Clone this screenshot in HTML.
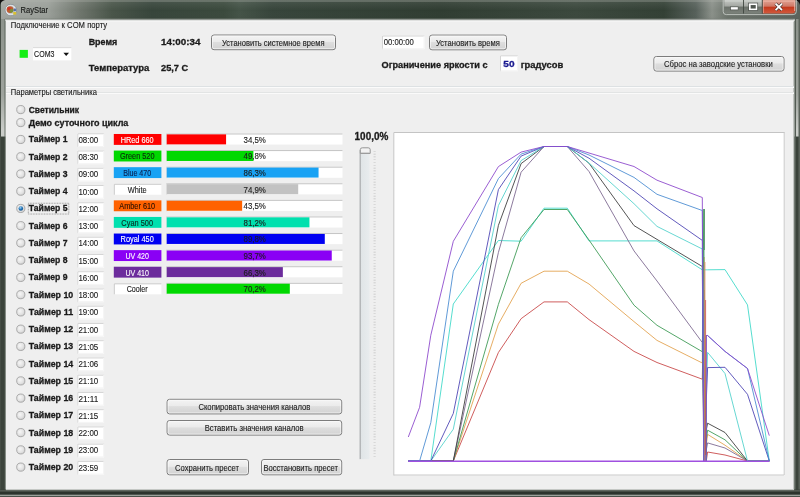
<!DOCTYPE html><html><head><meta charset="utf-8"><style>html,body{margin:0;padding:0;width:800px;height:497px;overflow:hidden;background:#7a807a}svg{display:block;filter:blur(0.3px)}text{font-family:"Liberation Sans",sans-serif}</style></head><body>
<svg width="800" height="497" viewBox="0 0 800 497">
<defs>
<linearGradient id="btn" x1="0" y1="0" x2="0" y2="1">
 <stop offset="0" stop-color="#f4f4f4"/><stop offset="0.45" stop-color="#ebebeb"/><stop offset="0.5" stop-color="#dedede"/><stop offset="1" stop-color="#d2d2d2"/>
</linearGradient>
<linearGradient id="title" x1="0" y1="0" x2="1" y2="0">
 <stop offset="0" stop-color="#a2a6a1"/><stop offset="0.06" stop-color="#9a9f99"/><stop offset="0.10" stop-color="#6e756c"/><stop offset="0.14" stop-color="#485448"/><stop offset="0.19" stop-color="#36443a"/>
 <stop offset="0.28" stop-color="#3a493c"/><stop offset="0.30" stop-color="#435246"/><stop offset="0.34" stop-color="#36443a"/>
 <stop offset="0.55" stop-color="#2f3c31"/><stop offset="0.72" stop-color="#3a473c"/><stop offset="0.83" stop-color="#323f34"/><stop offset="0.87" stop-color="#56605a"/><stop offset="0.89" stop-color="#8a9089"/><stop offset="0.91" stop-color="#6a726a"/><stop offset="1" stop-color="#5a625c"/>
</linearGradient>
<linearGradient id="tvert" x1="0" y1="0" x2="0" y2="1">
 <stop offset="0" stop-color="#ffffff" stop-opacity="0.10"/><stop offset="0.5" stop-color="#ffffff" stop-opacity="0"/><stop offset="1" stop-color="#000000" stop-opacity="0.05"/>
</linearGradient>
<linearGradient id="minb" x1="0" y1="0" x2="0" y2="1">
 <stop offset="0" stop-color="#c4c7c3"/><stop offset="0.45" stop-color="#a4a8a3"/><stop offset="0.52" stop-color="#6c726b"/><stop offset="1" stop-color="#7c827b"/>
</linearGradient>
<linearGradient id="closeb" x1="0" y1="0" x2="0" y2="1">
 <stop offset="0" stop-color="#e0a494"/><stop offset="0.45" stop-color="#d07a68"/><stop offset="0.55" stop-color="#c43a1e"/><stop offset="1" stop-color="#d25a3e"/>
</linearGradient>
<linearGradient id="lframe" x1="0" y1="0" x2="0" y2="1">
 <stop offset="0" stop-color="#8c928b"/><stop offset="0.16" stop-color="#9ea39d"/><stop offset="0.235" stop-color="#c9ccc8"/><stop offset="0.248" stop-color="#c9ccc8"/><stop offset="0.25" stop-color="#3a423a"/><stop offset="1" stop-color="#3c443c"/>
</linearGradient>
<linearGradient id="groove" x1="0" y1="0" x2="1" y2="0">
 <stop offset="0" stop-color="#b4b7b9"/><stop offset="0.15" stop-color="#e0e5e7"/><stop offset="1" stop-color="#e8ecee"/>
</linearGradient>
<radialGradient id="radio" cx="0.4" cy="0.4" r="0.7">
 <stop offset="0" stop-color="#f6f6f6"/><stop offset="0.6" stop-color="#e2e2e2"/><stop offset="1" stop-color="#c4c4c4"/>
</radialGradient>
<radialGradient id="radiodot" cx="0.4" cy="0.35" r="0.7">
 <stop offset="0" stop-color="#9fd3f3"/><stop offset="0.5" stop-color="#2a7cc0"/><stop offset="1" stop-color="#0d4a80"/>
</radialGradient>
</defs>
<rect x="0" y="0" width="800" height="497" fill="#3e463e"/>
<rect x="0" y="0" width="800" height="21" fill="url(#title)"/>
<rect x="0" y="0" width="800" height="21" fill="url(#tvert)"/>
<rect x="0" y="0.5" width="800" height="1" fill="#b0b4ae" opacity="0.6"/>
<rect x="0" y="19" width="6" height="472" fill="url(#lframe)"/>
<rect x="0" y="0" width="1" height="497" fill="#454d45"/>
<rect x="4.6" y="19" width="1" height="472" fill="#545c54"/>
<rect x="5.6" y="19" width="0.6" height="472" fill="#e4e8e4"/>
<rect x="794" y="19" width="6" height="472" fill="url(#lframe)"/>
<rect x="793.6" y="19" width="0.9" height="471" fill="#e8ece8"/>
<rect x="794.5" y="19" width="1.5" height="472" fill="#545c54"/>
<rect x="798.5" y="0" width="1.5" height="497" fill="#5a625a"/>
<rect x="0" y="489.5" width="800" height="7.5" fill="#3a423a"/>
<rect x="6" y="489.3" width="788" height="1" fill="#e4e8e4"/>
<rect x="0" y="490.3" width="800" height="1.4" fill="#5c645c"/>
<rect x="0" y="491.7" width="800" height="3" fill="#2c342d"/>
<rect x="0" y="494.7" width="800" height="1.3" fill="#9aa09a"/>
<rect x="0" y="496" width="800" height="1" fill="#4a524a"/>
<path d="M0 0 H5 Q1 1 0 5 Z" fill="#111"/>
<path d="M800 0 H795 Q799 1 800 5 Z" fill="#111"/>
<rect x="5" y="18.6" width="790" height="1" fill="#7c827c"/>
<rect x="5" y="19.6" width="790" height="1" fill="#dfe2df"/>
<rect x="6" y="20.5" width="787.6" height="468.8" fill="#efefef"/>
<rect x="6" y="20.5" width="788" height="1" fill="#fafafa"/>
<circle cx="10.8" cy="10" r="5" fill="#c8ccd0" stroke="#eef0f2" stroke-width="1.2"/>
<circle cx="10.8" cy="10" r="5.6" fill="none" stroke="#5c6a7c" stroke-width="0.6" opacity="0.7"/>
<circle cx="10" cy="9.6" r="3.4" fill="#c05a30"/>
<circle cx="11.5" cy="10.8" r="2" fill="#6a9a40" opacity="0.8"/>
<circle cx="9" cy="8.5" r="1.6" fill="#d03028" opacity="0.9"/>
<rect x="13.2" y="12" width="3" height="2.6" fill="#d8c030"/>
<rect x="13.6" y="8.6" width="2.6" height="2.6" fill="#3a5a9a" opacity="0.8"/>
<text x="20.6" y="12.8" font-size="8.8" textLength="27.4" lengthAdjust="spacingAndGlyphs" fill="#1a1c1a" stroke="#1a1c1a" stroke-width="0.15">RayStar</text>
<path d="M723.2 0 V11.5 Q723.2 14.6 726.3 14.6 H793.2 Q796.3 14.6 796.3 11.5 V0" fill="none" stroke="#c4c8c4" stroke-width="0.9"/>
<path d="M724.3 0 V10.8 Q724.3 13.5 727 13.5 H743.2 V0 Z" fill="url(#minb)"/>
<path d="M743.8 0 V13.5 H762 V0 Z" fill="url(#minb)"/>
<path d="M762.6 0 V13.5 H792.6 Q795.3 13.5 795.3 10.8 V0 Z" fill="url(#closeb)"/>
<path d="M724.8 1 H742.8 M744.3 1 H761.5" stroke="#d4d8d4" stroke-width="0.9"/>
<path d="M763.2 1.2 H794.6 M763.2 1.2 V13 M794.6 1.2 V11" stroke="#f0b8a8" stroke-width="0.8" fill="none"/>
<path d="M743.5 0 V13.5 M762.3 0 V13.5" stroke="#3c423c" stroke-width="0.8"/>
<rect x="730.6" y="6.9" width="7.5" height="3" fill="#ffffff" stroke="#3a3e3a" stroke-width="0.5"/>
<rect x="749.8" y="4.2" width="6.8" height="5.2" fill="#505650" stroke="#ffffff" stroke-width="1.7"/>
<rect x="748.6" y="3" width="9.2" height="7.6" fill="none" stroke="#3a3e3a" stroke-width="0.5"/>
<path d="M775.6 3.6 L782 10.2 M782 3.6 L775.6 10.2" stroke="#3a2a28" stroke-width="3"/>
<path d="M775.6 3.6 L782 10.2 M782 3.6 L775.6 10.2" stroke="#ffffff" stroke-width="1.9"/>
<text x="10.8" y="28.2" font-size="8.4" stroke="#1b1b1b" stroke-width="0.12" textLength="96.3" lengthAdjust="spacingAndGlyphs" fill="#1b1b1b" >Подключение к COM порту</text>
<rect x="19.6" y="49.9" width="8.3" height="7.9" fill="#14ee14"/>
<rect x="33" y="47.3" width="38.3" height="13.1" fill="#ffffff"/>
<rect x="33" y="47.3" width="38.3" height="0.8" fill="#d0d0d0"/>
<text x="34.1" y="56.7" font-size="8.4" stroke="#1b1b1b" stroke-width="0.12" textLength="20.3" lengthAdjust="spacingAndGlyphs" fill="#1b1b1b" >COM3</text>
<path d="M63.4 52.8 H69 L66.2 56 Z" fill="#111"/>
<text x="88.7" y="45" font-size="9.3" font-weight="bold" stroke="#1b1b1b" stroke-width="0.3" textLength="28.5" lengthAdjust="spacingAndGlyphs" fill="#1b1b1b" >Время</text>
<text x="161" y="45" font-size="9.3" font-weight="bold" stroke="#1b1b1b" stroke-width="0.3" textLength="39.4" lengthAdjust="spacingAndGlyphs" fill="#1b1b1b" >14:00:34</text>
<rect x="211.5" y="35.0" width="124" height="14.700000000000003" rx="2.5" fill="url(#btn)" stroke="#7c7c7c" stroke-width="1"/>
<rect x="212.5" y="36.0" width="122" height="12.700000000000003" rx="1.5" fill="none" stroke="#fbfbfb" stroke-width="0.8" opacity="0.8"/>
<text x="222" y="45.599999999999994" font-size="8.6" stroke="#1e1e1e" stroke-width="0.12" textLength="102.5" lengthAdjust="spacingAndGlyphs" fill="#1e1e1e" >Установить системное время</text>
<rect x="382" y="35.5" width="42.5" height="13.700000000000003" fill="#ffffff"/>
<path d="M382.5 49.2 V36.0 H424.5" fill="none" stroke="#d4d4d4" stroke-width="1"/>
<path d="M382.5 48.7 H424.0 V36.0" fill="none" stroke="#f4f4f4" stroke-width="1"/>
<text x="383.8" y="44.8" font-size="8.4" stroke="#1b1b1b" stroke-width="0.12" textLength="30" lengthAdjust="spacingAndGlyphs" fill="#1b1b1b" >00:00:00</text>
<rect x="429.5" y="35.1" width="77" height="14.699999999999996" rx="2.5" fill="url(#btn)" stroke="#7c7c7c" stroke-width="1"/>
<rect x="430.5" y="36.1" width="75" height="12.699999999999996" rx="1.5" fill="none" stroke="#fbfbfb" stroke-width="0.8" opacity="0.8"/>
<text x="436" y="45.599999999999994" font-size="8.6" stroke="#1e1e1e" stroke-width="0.12" textLength="63.8" lengthAdjust="spacingAndGlyphs" fill="#1e1e1e" >Установить время</text>
<text x="88.7" y="70.8" font-size="9.3" font-weight="bold" stroke="#1b1b1b" stroke-width="0.3" textLength="60.6" lengthAdjust="spacingAndGlyphs" fill="#1b1b1b" >Температура</text>
<text x="161" y="70.8" font-size="9.3" font-weight="bold" stroke="#1b1b1b" stroke-width="0.3" textLength="27.2" lengthAdjust="spacingAndGlyphs" fill="#1b1b1b" >25,7 C</text>
<text x="381.5" y="68.2" font-size="9.3" font-weight="bold" stroke="#1b1b1b" stroke-width="0.3" textLength="106" lengthAdjust="spacingAndGlyphs" fill="#1b1b1b" >Ограничение яркости с</text>
<rect x="500" y="55.3" width="18" height="15.900000000000006" fill="#ffffff"/>
<path d="M500.5 71.2 V55.8 H518" fill="none" stroke="#d4d4d4" stroke-width="1"/>
<path d="M500.5 70.7 H517.5 V55.8" fill="none" stroke="#f4f4f4" stroke-width="1"/>
<text x="503.3" y="66.6" font-size="9.3" font-weight="bold" stroke="#1a1a90" stroke-width="0.3" textLength="11.2" lengthAdjust="spacingAndGlyphs" fill="#1a1a90" >50</text>
<text x="520.7" y="68.2" font-size="9.3" font-weight="bold" stroke="#1b1b1b" stroke-width="0.3" textLength="42.6" lengthAdjust="spacingAndGlyphs" fill="#1b1b1b" >градусов</text>
<rect x="653.9" y="56.5" width="130.10000000000002" height="14.599999999999994" rx="2.5" fill="url(#btn)" stroke="#7c7c7c" stroke-width="1"/>
<rect x="654.9" y="57.5" width="128.10000000000002" height="12.599999999999994" rx="1.5" fill="none" stroke="#fbfbfb" stroke-width="0.8" opacity="0.8"/>
<text x="664" y="67.2" font-size="8.6" stroke="#1e1e1e" stroke-width="0.12" textLength="108.8" lengthAdjust="spacingAndGlyphs" fill="#1e1e1e" >Сброс на заводские установки</text>
<rect x="6" y="86" width="788" height="1" fill="#dde1e3"/>
<rect x="6" y="87" width="788" height="1" fill="#fbfbfb"/>
<rect x="6" y="92" width="788" height="1" fill="#e2e4e4"/>
<rect x="6" y="93" width="788" height="1" fill="#fafafa"/>
<text x="10.8" y="95.1" font-size="8.4" stroke="#1b1b1b" stroke-width="0.12" textLength="86.1" lengthAdjust="spacingAndGlyphs" fill="#1b1b1b" >Параметры светильника</text>
<circle cx="20.8" cy="109.6" r="4.1" fill="url(#radio)" stroke="#a4a4a4" stroke-width="0.9"/>
<text x="28.7" y="112.5" font-size="9.3" font-weight="bold" stroke="#1b1b1b" stroke-width="0.3" textLength="50.3" lengthAdjust="spacingAndGlyphs" fill="#1b1b1b" >Светильник</text>
<circle cx="20.8" cy="122.6" r="4.1" fill="url(#radio)" stroke="#a4a4a4" stroke-width="0.9"/>
<text x="28.7" y="125.5" font-size="9.3" font-weight="bold" stroke="#1b1b1b" stroke-width="0.3" textLength="99.7" lengthAdjust="spacingAndGlyphs" fill="#1b1b1b" >Демо суточного цикла</text>
<circle cx="20.8" cy="139.46" r="4.1" fill="url(#radio)" stroke="#a4a4a4" stroke-width="0.9"/>
<text x="28.7" y="142.46" font-size="9.3" font-weight="bold" stroke="#1b1b1b" stroke-width="0.3" textLength="38.9" lengthAdjust="spacingAndGlyphs" fill="#1b1b1b" >Таймер 1</text>
<rect x="77.3" y="133.26" width="26.799999999999997" height="13.700000000000017" fill="#ffffff"/>
<path d="M77.8 146.96 V133.76 H104.1" fill="none" stroke="#d4d4d4" stroke-width="1"/>
<path d="M77.8 146.46 H103.6 V133.76" fill="none" stroke="#f4f4f4" stroke-width="1"/>
<text x="78.4" y="142.96" font-size="8.4" stroke="#1b1b1b" stroke-width="0.12" textLength="19.9" lengthAdjust="spacingAndGlyphs" fill="#1b1b1b" >08:00</text>
<circle cx="20.8" cy="156.71" r="4.1" fill="url(#radio)" stroke="#a4a4a4" stroke-width="0.9"/>
<text x="28.7" y="159.71" font-size="9.3" font-weight="bold" stroke="#1b1b1b" stroke-width="0.3" textLength="38.9" lengthAdjust="spacingAndGlyphs" fill="#1b1b1b" >Таймер 2</text>
<rect x="77.3" y="150.51" width="26.799999999999997" height="13.700000000000017" fill="#ffffff"/>
<path d="M77.8 164.21 V151.01 H104.1" fill="none" stroke="#d4d4d4" stroke-width="1"/>
<path d="M77.8 163.71 H103.6 V151.01" fill="none" stroke="#f4f4f4" stroke-width="1"/>
<text x="78.4" y="160.21" font-size="8.4" stroke="#1b1b1b" stroke-width="0.12" textLength="19.9" lengthAdjust="spacingAndGlyphs" fill="#1b1b1b" >08:30</text>
<circle cx="20.8" cy="173.95" r="4.1" fill="url(#radio)" stroke="#a4a4a4" stroke-width="0.9"/>
<text x="28.7" y="176.95" font-size="9.3" font-weight="bold" stroke="#1b1b1b" stroke-width="0.3" textLength="38.9" lengthAdjust="spacingAndGlyphs" fill="#1b1b1b" >Таймер 3</text>
<rect x="77.3" y="167.75" width="26.799999999999997" height="13.699999999999989" fill="#ffffff"/>
<path d="M77.8 181.45 V168.25 H104.1" fill="none" stroke="#d4d4d4" stroke-width="1"/>
<path d="M77.8 180.95 H103.6 V168.25" fill="none" stroke="#f4f4f4" stroke-width="1"/>
<text x="78.4" y="177.45" font-size="8.4" stroke="#1b1b1b" stroke-width="0.12" textLength="19.9" lengthAdjust="spacingAndGlyphs" fill="#1b1b1b" >09:00</text>
<circle cx="20.8" cy="191.19" r="4.1" fill="url(#radio)" stroke="#a4a4a4" stroke-width="0.9"/>
<text x="28.7" y="194.19" font-size="9.3" font-weight="bold" stroke="#1b1b1b" stroke-width="0.3" textLength="38.9" lengthAdjust="spacingAndGlyphs" fill="#1b1b1b" >Таймер 4</text>
<rect x="77.3" y="185.0" width="26.799999999999997" height="13.689999999999998" fill="#ffffff"/>
<path d="M77.8 198.69 V185.5 H104.1" fill="none" stroke="#d4d4d4" stroke-width="1"/>
<path d="M77.8 198.19 H103.6 V185.5" fill="none" stroke="#f4f4f4" stroke-width="1"/>
<text x="78.4" y="194.69" font-size="8.4" stroke="#1b1b1b" stroke-width="0.12" textLength="19.9" lengthAdjust="spacingAndGlyphs" fill="#1b1b1b" >10:00</text>
<circle cx="20.8" cy="208.44" r="4.1" fill="url(#radio)" stroke="#a4a4a4" stroke-width="0.9"/>
<circle cx="20.8" cy="208.44" r="2.3" fill="url(#radiodot)"/>
<text x="28.7" y="211.44" font-size="9.3" font-weight="bold" stroke="#1b1b1b" stroke-width="0.3" textLength="38.9" lengthAdjust="spacingAndGlyphs" fill="#1b1b1b" >Таймер 5</text>
<rect x="28.3" y="203.24" width="40.5" height="10.8" fill="none" stroke="#555" stroke-width="0.6" stroke-dasharray="0.8 0.8"/>
<rect x="77.3" y="202.24" width="26.799999999999997" height="13.699999999999989" fill="#ffffff"/>
<path d="M77.8 215.94 V202.74 H104.1" fill="none" stroke="#d4d4d4" stroke-width="1"/>
<path d="M77.8 215.44 H103.6 V202.74" fill="none" stroke="#f4f4f4" stroke-width="1"/>
<text x="78.4" y="211.94" font-size="8.4" stroke="#1b1b1b" stroke-width="0.12" textLength="19.9" lengthAdjust="spacingAndGlyphs" fill="#1b1b1b" >12:00</text>
<circle cx="20.8" cy="225.69" r="4.1" fill="url(#radio)" stroke="#a4a4a4" stroke-width="0.9"/>
<text x="28.7" y="228.69" font-size="9.3" font-weight="bold" stroke="#1b1b1b" stroke-width="0.3" textLength="38.9" lengthAdjust="spacingAndGlyphs" fill="#1b1b1b" >Таймер 6</text>
<rect x="77.3" y="219.49" width="26.799999999999997" height="13.699999999999989" fill="#ffffff"/>
<path d="M77.8 233.19 V219.99 H104.1" fill="none" stroke="#d4d4d4" stroke-width="1"/>
<path d="M77.8 232.69 H103.6 V219.99" fill="none" stroke="#f4f4f4" stroke-width="1"/>
<text x="78.4" y="229.19" font-size="8.4" stroke="#1b1b1b" stroke-width="0.12" textLength="19.9" lengthAdjust="spacingAndGlyphs" fill="#1b1b1b" >13:00</text>
<circle cx="20.8" cy="242.93" r="4.1" fill="url(#radio)" stroke="#a4a4a4" stroke-width="0.9"/>
<text x="28.7" y="245.93" font-size="9.3" font-weight="bold" stroke="#1b1b1b" stroke-width="0.3" textLength="38.9" lengthAdjust="spacingAndGlyphs" fill="#1b1b1b" >Таймер 7</text>
<rect x="77.3" y="236.73" width="26.799999999999997" height="13.700000000000017" fill="#ffffff"/>
<path d="M77.8 250.43 V237.23 H104.1" fill="none" stroke="#d4d4d4" stroke-width="1"/>
<path d="M77.8 249.93 H103.6 V237.23" fill="none" stroke="#f4f4f4" stroke-width="1"/>
<text x="78.4" y="246.43" font-size="8.4" stroke="#1b1b1b" stroke-width="0.12" textLength="19.9" lengthAdjust="spacingAndGlyphs" fill="#1b1b1b" >14:00</text>
<circle cx="20.8" cy="260.18" r="4.1" fill="url(#radio)" stroke="#a4a4a4" stroke-width="0.9"/>
<text x="28.7" y="263.18" font-size="9.3" font-weight="bold" stroke="#1b1b1b" stroke-width="0.3" textLength="38.9" lengthAdjust="spacingAndGlyphs" fill="#1b1b1b" >Таймер 8</text>
<rect x="77.3" y="253.98" width="26.799999999999997" height="13.700000000000017" fill="#ffffff"/>
<path d="M77.8 267.68 V254.48 H104.1" fill="none" stroke="#d4d4d4" stroke-width="1"/>
<path d="M77.8 267.18 H103.6 V254.48" fill="none" stroke="#f4f4f4" stroke-width="1"/>
<text x="78.4" y="263.68" font-size="8.4" stroke="#1b1b1b" stroke-width="0.12" textLength="19.9" lengthAdjust="spacingAndGlyphs" fill="#1b1b1b" >15:00</text>
<circle cx="20.8" cy="277.42" r="4.1" fill="url(#radio)" stroke="#a4a4a4" stroke-width="0.9"/>
<text x="28.7" y="280.42" font-size="9.3" font-weight="bold" stroke="#1b1b1b" stroke-width="0.3" textLength="38.9" lengthAdjust="spacingAndGlyphs" fill="#1b1b1b" >Таймер 9</text>
<rect x="77.3" y="271.22" width="26.799999999999997" height="13.699999999999989" fill="#ffffff"/>
<path d="M77.8 284.92 V271.72 H104.1" fill="none" stroke="#d4d4d4" stroke-width="1"/>
<path d="M77.8 284.42 H103.6 V271.72" fill="none" stroke="#f4f4f4" stroke-width="1"/>
<text x="78.4" y="280.92" font-size="8.4" stroke="#1b1b1b" stroke-width="0.12" textLength="19.9" lengthAdjust="spacingAndGlyphs" fill="#1b1b1b" >16:00</text>
<circle cx="20.8" cy="294.67" r="4.1" fill="url(#radio)" stroke="#a4a4a4" stroke-width="0.9"/>
<text x="28.7" y="297.67" font-size="9.3" font-weight="bold" stroke="#1b1b1b" stroke-width="0.3" textLength="44.5" lengthAdjust="spacingAndGlyphs" fill="#1b1b1b" >Таймер 10</text>
<rect x="77.3" y="288.47" width="26.799999999999997" height="13.699999999999989" fill="#ffffff"/>
<path d="M77.8 302.17 V288.97 H104.1" fill="none" stroke="#d4d4d4" stroke-width="1"/>
<path d="M77.8 301.67 H103.6 V288.97" fill="none" stroke="#f4f4f4" stroke-width="1"/>
<text x="78.4" y="298.17" font-size="8.4" stroke="#1b1b1b" stroke-width="0.12" textLength="19.9" lengthAdjust="spacingAndGlyphs" fill="#1b1b1b" >18:00</text>
<circle cx="20.8" cy="311.91" r="4.1" fill="url(#radio)" stroke="#a4a4a4" stroke-width="0.9"/>
<text x="28.7" y="314.91" font-size="9.3" font-weight="bold" stroke="#1b1b1b" stroke-width="0.3" textLength="44.5" lengthAdjust="spacingAndGlyphs" fill="#1b1b1b" >Таймер 11</text>
<rect x="77.3" y="305.71" width="26.799999999999997" height="13.700000000000045" fill="#ffffff"/>
<path d="M77.8 319.41 V306.21 H104.1" fill="none" stroke="#d4d4d4" stroke-width="1"/>
<path d="M77.8 318.91 H103.6 V306.21" fill="none" stroke="#f4f4f4" stroke-width="1"/>
<text x="78.4" y="315.41" font-size="8.4" stroke="#1b1b1b" stroke-width="0.12" textLength="19.9" lengthAdjust="spacingAndGlyphs" fill="#1b1b1b" >19:00</text>
<circle cx="20.8" cy="329.16" r="4.1" fill="url(#radio)" stroke="#a4a4a4" stroke-width="0.9"/>
<text x="28.7" y="332.16" font-size="9.3" font-weight="bold" stroke="#1b1b1b" stroke-width="0.3" textLength="44.5" lengthAdjust="spacingAndGlyphs" fill="#1b1b1b" >Таймер 12</text>
<rect x="77.3" y="322.96" width="26.799999999999997" height="13.700000000000045" fill="#ffffff"/>
<path d="M77.8 336.66 V323.46 H104.1" fill="none" stroke="#d4d4d4" stroke-width="1"/>
<path d="M77.8 336.16 H103.6 V323.46" fill="none" stroke="#f4f4f4" stroke-width="1"/>
<text x="78.4" y="332.66" font-size="8.4" stroke="#1b1b1b" stroke-width="0.12" textLength="19.9" lengthAdjust="spacingAndGlyphs" fill="#1b1b1b" >21:00</text>
<circle cx="20.8" cy="346.4" r="4.1" fill="url(#radio)" stroke="#a4a4a4" stroke-width="0.9"/>
<text x="28.7" y="349.4" font-size="9.3" font-weight="bold" stroke="#1b1b1b" stroke-width="0.3" textLength="44.5" lengthAdjust="spacingAndGlyphs" fill="#1b1b1b" >Таймер 13</text>
<rect x="77.3" y="340.2" width="26.799999999999997" height="13.699999999999989" fill="#ffffff"/>
<path d="M77.8 353.9 V340.7 H104.1" fill="none" stroke="#d4d4d4" stroke-width="1"/>
<path d="M77.8 353.4 H103.6 V340.7" fill="none" stroke="#f4f4f4" stroke-width="1"/>
<text x="78.4" y="349.9" font-size="8.4" stroke="#1b1b1b" stroke-width="0.12" textLength="19.9" lengthAdjust="spacingAndGlyphs" fill="#1b1b1b" >21:05</text>
<circle cx="20.8" cy="363.64" r="4.1" fill="url(#radio)" stroke="#a4a4a4" stroke-width="0.9"/>
<text x="28.7" y="366.64" font-size="9.3" font-weight="bold" stroke="#1b1b1b" stroke-width="0.3" textLength="44.5" lengthAdjust="spacingAndGlyphs" fill="#1b1b1b" >Таймер 14</text>
<rect x="77.3" y="357.44" width="26.799999999999997" height="13.699999999999989" fill="#ffffff"/>
<path d="M77.8 371.14 V357.94 H104.1" fill="none" stroke="#d4d4d4" stroke-width="1"/>
<path d="M77.8 370.64 H103.6 V357.94" fill="none" stroke="#f4f4f4" stroke-width="1"/>
<text x="78.4" y="367.14" font-size="8.4" stroke="#1b1b1b" stroke-width="0.12" textLength="19.9" lengthAdjust="spacingAndGlyphs" fill="#1b1b1b" >21:06</text>
<circle cx="20.8" cy="380.89" r="4.1" fill="url(#radio)" stroke="#a4a4a4" stroke-width="0.9"/>
<text x="28.7" y="383.89" font-size="9.3" font-weight="bold" stroke="#1b1b1b" stroke-width="0.3" textLength="44.5" lengthAdjust="spacingAndGlyphs" fill="#1b1b1b" >Таймер 15</text>
<rect x="77.3" y="374.69" width="26.799999999999997" height="13.699999999999989" fill="#ffffff"/>
<path d="M77.8 388.39 V375.19 H104.1" fill="none" stroke="#d4d4d4" stroke-width="1"/>
<path d="M77.8 387.89 H103.6 V375.19" fill="none" stroke="#f4f4f4" stroke-width="1"/>
<text x="78.4" y="384.39" font-size="8.4" stroke="#1b1b1b" stroke-width="0.12" textLength="19.9" lengthAdjust="spacingAndGlyphs" fill="#1b1b1b" >21:10</text>
<circle cx="20.8" cy="398.13" r="4.1" fill="url(#radio)" stroke="#a4a4a4" stroke-width="0.9"/>
<text x="28.7" y="401.13" font-size="9.3" font-weight="bold" stroke="#1b1b1b" stroke-width="0.3" textLength="44.5" lengthAdjust="spacingAndGlyphs" fill="#1b1b1b" >Таймер 16</text>
<rect x="77.3" y="391.94" width="26.799999999999997" height="13.689999999999998" fill="#ffffff"/>
<path d="M77.8 405.63 V392.44 H104.1" fill="none" stroke="#d4d4d4" stroke-width="1"/>
<path d="M77.8 405.13 H103.6 V392.44" fill="none" stroke="#f4f4f4" stroke-width="1"/>
<text x="78.4" y="401.63" font-size="8.4" stroke="#1b1b1b" stroke-width="0.12" textLength="19.9" lengthAdjust="spacingAndGlyphs" fill="#1b1b1b" >21:11</text>
<circle cx="20.8" cy="415.38" r="4.1" fill="url(#radio)" stroke="#a4a4a4" stroke-width="0.9"/>
<text x="28.7" y="418.38" font-size="9.3" font-weight="bold" stroke="#1b1b1b" stroke-width="0.3" textLength="44.5" lengthAdjust="spacingAndGlyphs" fill="#1b1b1b" >Таймер 17</text>
<rect x="77.3" y="409.18" width="26.799999999999997" height="13.699999999999989" fill="#ffffff"/>
<path d="M77.8 422.88 V409.68 H104.1" fill="none" stroke="#d4d4d4" stroke-width="1"/>
<path d="M77.8 422.38 H103.6 V409.68" fill="none" stroke="#f4f4f4" stroke-width="1"/>
<text x="78.4" y="418.88" font-size="8.4" stroke="#1b1b1b" stroke-width="0.12" textLength="19.9" lengthAdjust="spacingAndGlyphs" fill="#1b1b1b" >21:15</text>
<circle cx="20.8" cy="432.62" r="4.1" fill="url(#radio)" stroke="#a4a4a4" stroke-width="0.9"/>
<text x="28.7" y="435.62" font-size="9.3" font-weight="bold" stroke="#1b1b1b" stroke-width="0.3" textLength="44.5" lengthAdjust="spacingAndGlyphs" fill="#1b1b1b" >Таймер 18</text>
<rect x="77.3" y="426.43" width="26.799999999999997" height="13.689999999999998" fill="#ffffff"/>
<path d="M77.8 440.12 V426.93 H104.1" fill="none" stroke="#d4d4d4" stroke-width="1"/>
<path d="M77.8 439.62 H103.6 V426.93" fill="none" stroke="#f4f4f4" stroke-width="1"/>
<text x="78.4" y="436.12" font-size="8.4" stroke="#1b1b1b" stroke-width="0.12" textLength="19.9" lengthAdjust="spacingAndGlyphs" fill="#1b1b1b" >22:00</text>
<circle cx="20.8" cy="449.87" r="4.1" fill="url(#radio)" stroke="#a4a4a4" stroke-width="0.9"/>
<text x="28.7" y="452.87" font-size="9.3" font-weight="bold" stroke="#1b1b1b" stroke-width="0.3" textLength="44.5" lengthAdjust="spacingAndGlyphs" fill="#1b1b1b" >Таймер 19</text>
<rect x="77.3" y="443.67" width="26.799999999999997" height="13.699999999999989" fill="#ffffff"/>
<path d="M77.8 457.37 V444.17 H104.1" fill="none" stroke="#d4d4d4" stroke-width="1"/>
<path d="M77.8 456.87 H103.6 V444.17" fill="none" stroke="#f4f4f4" stroke-width="1"/>
<text x="78.4" y="453.37" font-size="8.4" stroke="#1b1b1b" stroke-width="0.12" textLength="19.9" lengthAdjust="spacingAndGlyphs" fill="#1b1b1b" >23:00</text>
<circle cx="20.8" cy="467.12" r="4.1" fill="url(#radio)" stroke="#a4a4a4" stroke-width="0.9"/>
<text x="28.7" y="470.12" font-size="9.3" font-weight="bold" stroke="#1b1b1b" stroke-width="0.3" textLength="44.5" lengthAdjust="spacingAndGlyphs" fill="#1b1b1b" >Таймер 20</text>
<rect x="77.3" y="460.92" width="26.799999999999997" height="13.699999999999989" fill="#ffffff"/>
<path d="M77.8 474.62 V461.42 H104.1" fill="none" stroke="#d4d4d4" stroke-width="1"/>
<path d="M77.8 474.12 H103.6 V461.42" fill="none" stroke="#f4f4f4" stroke-width="1"/>
<text x="78.4" y="470.62" font-size="8.4" stroke="#1b1b1b" stroke-width="0.12" textLength="19.9" lengthAdjust="spacingAndGlyphs" fill="#1b1b1b" >23:59</text>
<rect x="113.8" y="133.98" width="47.6" height="10.9" fill="#ff0000"/>
<text x="137.2" y="142.88" font-size="8.4" stroke="#ffffff" stroke-width="0.12" text-anchor="middle" fill="#ffffff" textLength="33" lengthAdjust="spacingAndGlyphs">HRed 660</text>
<rect x="166.2" y="133.48" width="176.3" height="11.1" fill="#ffffff"/>
<rect x="166.2" y="133.48" width="176.3" height="1" fill="#c4c4c4"/>
<rect x="166.2" y="133.98" width="1" height="11" fill="#e0e0e0"/>
<rect x="166.7" y="134.38" width="59.38" height="10" fill="#ff0000"/>
<text x="254.7" y="142.78" font-size="8.2" stroke="#1b1b1b" stroke-width="0.12" text-anchor="middle" fill="#1b1b1b" textLength="22.4" lengthAdjust="spacingAndGlyphs">34,5%</text>
<rect x="113.8" y="150.57" width="47.6" height="10.9" fill="#00d800"/>
<text x="137.2" y="159.47" font-size="8.4" stroke="#0b2a0b" stroke-width="0.12" text-anchor="middle" fill="#0b2a0b" textLength="34.5" lengthAdjust="spacingAndGlyphs">Green 520</text>
<rect x="166.2" y="150.07" width="176.3" height="11.1" fill="#ffffff"/>
<rect x="166.2" y="150.07" width="176.3" height="1" fill="#c4c4c4"/>
<rect x="166.2" y="150.57" width="1" height="11" fill="#e0e0e0"/>
<rect x="166.7" y="150.97" width="86.69" height="10" fill="#00d800"/>
<text x="254.7" y="159.37" font-size="8.2" stroke="#1b1b1b" stroke-width="0.12" text-anchor="middle" fill="#1b1b1b" textLength="22.4" lengthAdjust="spacingAndGlyphs">49,8%</text>
<rect x="113.8" y="167.17" width="47.6" height="10.9" fill="#18a2f4"/>
<text x="137.2" y="176.07" font-size="8.4" stroke="#0a2050" stroke-width="0.12" text-anchor="middle" fill="#0a2050" textLength="28" lengthAdjust="spacingAndGlyphs">Blue 470</text>
<rect x="166.2" y="166.67" width="176.3" height="11.1" fill="#ffffff"/>
<rect x="166.2" y="166.67" width="176.3" height="1" fill="#c4c4c4"/>
<rect x="166.2" y="167.17" width="1" height="11" fill="#e0e0e0"/>
<rect x="166.7" y="167.57" width="151.85" height="10" fill="#18a2f4"/>
<text x="254.7" y="175.97" font-size="8.2" stroke="#1b1b1b" stroke-width="0.12" text-anchor="middle" fill="#1b1b1b" textLength="22.4" lengthAdjust="spacingAndGlyphs">86,3%</text>
<rect x="113.8" y="183.76" width="47.6" height="11" fill="#ffffff"/>
<path d="M114.3 194.76 V184.26 H161.4" fill="none" stroke="#c8c8c8" stroke-width="1"/>
<text x="137.2" y="192.66" font-size="8.4" stroke="#1b1b1b" stroke-width="0.12" text-anchor="middle" fill="#1b1b1b" textLength="18.9" lengthAdjust="spacingAndGlyphs">White</text>
<rect x="166.2" y="183.26" width="176.3" height="11.1" fill="#ffffff"/>
<rect x="166.2" y="183.26" width="176.3" height="1" fill="#c4c4c4"/>
<rect x="166.2" y="183.76" width="1" height="11" fill="#e0e0e0"/>
<rect x="166.7" y="184.16" width="131.5" height="10" fill="#c2c2c2"/>
<text x="254.7" y="192.56" font-size="8.2" stroke="#1b1b1b" stroke-width="0.12" text-anchor="middle" fill="#1b1b1b" textLength="22.4" lengthAdjust="spacingAndGlyphs">74,9%</text>
<rect x="113.8" y="200.35" width="47.6" height="10.9" fill="#ff6200"/>
<text x="137.2" y="209.25" font-size="8.4" stroke="#2a1000" stroke-width="0.12" text-anchor="middle" fill="#2a1000" textLength="35.9" lengthAdjust="spacingAndGlyphs">Amber 610</text>
<rect x="166.2" y="199.85" width="176.3" height="11.1" fill="#ffffff"/>
<rect x="166.2" y="199.85" width="176.3" height="1" fill="#c4c4c4"/>
<rect x="166.2" y="200.35" width="1" height="11" fill="#e0e0e0"/>
<rect x="166.7" y="200.75" width="75.45" height="10" fill="#ff6200"/>
<text x="254.7" y="209.15" font-size="8.2" stroke="#1b1b1b" stroke-width="0.12" text-anchor="middle" fill="#1b1b1b" textLength="22.4" lengthAdjust="spacingAndGlyphs">43,5%</text>
<rect x="113.8" y="216.94" width="47.6" height="10.9" fill="#00e0ae"/>
<text x="137.2" y="225.84" font-size="8.4" stroke="#0a2a20" stroke-width="0.12" text-anchor="middle" fill="#0a2a20" textLength="31.7" lengthAdjust="spacingAndGlyphs">Cyan 500</text>
<rect x="166.2" y="216.44" width="176.3" height="11.1" fill="#ffffff"/>
<rect x="166.2" y="216.44" width="176.3" height="1" fill="#c4c4c4"/>
<rect x="166.2" y="216.94" width="1" height="11" fill="#e0e0e0"/>
<rect x="166.7" y="217.34" width="142.74" height="10" fill="#00e0ae"/>
<text x="254.7" y="225.74" font-size="8.2" stroke="#1b1b1b" stroke-width="0.12" text-anchor="middle" fill="#1b1b1b" textLength="22.4" lengthAdjust="spacingAndGlyphs">81,2%</text>
<rect x="113.8" y="233.54" width="47.6" height="10.9" fill="#0000f2"/>
<text x="137.2" y="242.44" font-size="8.4" stroke="#ffffff" stroke-width="0.12" text-anchor="middle" fill="#ffffff" textLength="33.2" lengthAdjust="spacingAndGlyphs">Royal 450</text>
<rect x="166.2" y="233.04" width="176.3" height="11.1" fill="#ffffff"/>
<rect x="166.2" y="233.04" width="176.3" height="1" fill="#c4c4c4"/>
<rect x="166.2" y="233.54" width="1" height="11" fill="#e0e0e0"/>
<rect x="166.7" y="233.94" width="158.09" height="10" fill="#0000f2"/>
<text x="254.7" y="242.34" font-size="8.2" stroke="#1b1b1b" stroke-width="0.12" text-anchor="middle" fill="#1b1b1b" textLength="22.4" lengthAdjust="spacingAndGlyphs">89,8%</text>
<rect x="113.8" y="250.13" width="47.6" height="10.9" fill="#8a00f5"/>
<text x="137.2" y="259.03" font-size="8.4" stroke="#ffffff" stroke-width="0.12" text-anchor="middle" fill="#ffffff" textLength="23.5" lengthAdjust="spacingAndGlyphs">UV 420</text>
<rect x="166.2" y="249.63" width="176.3" height="11.1" fill="#ffffff"/>
<rect x="166.2" y="249.63" width="176.3" height="1" fill="#c4c4c4"/>
<rect x="166.2" y="250.13" width="1" height="11" fill="#e0e0e0"/>
<rect x="166.7" y="250.53" width="165.05" height="10" fill="#8a00f5"/>
<text x="254.7" y="258.93" font-size="8.2" stroke="#1b1b1b" stroke-width="0.12" text-anchor="middle" fill="#1b1b1b" textLength="22.4" lengthAdjust="spacingAndGlyphs">93,7%</text>
<rect x="113.8" y="266.72" width="47.6" height="10.9" fill="#6c2c9c"/>
<text x="137.2" y="275.62" font-size="8.4" stroke="#ffffff" stroke-width="0.12" text-anchor="middle" fill="#ffffff" textLength="23.5" lengthAdjust="spacingAndGlyphs">UV 410</text>
<rect x="166.2" y="266.22" width="176.3" height="11.1" fill="#ffffff"/>
<rect x="166.2" y="266.22" width="176.3" height="1" fill="#c4c4c4"/>
<rect x="166.2" y="266.72" width="1" height="11" fill="#e0e0e0"/>
<rect x="166.7" y="267.12" width="116.15" height="10" fill="#6c2c9c"/>
<text x="254.7" y="275.52" font-size="8.2" stroke="#1b1b1b" stroke-width="0.12" text-anchor="middle" fill="#1b1b1b" textLength="22.4" lengthAdjust="spacingAndGlyphs">66,3%</text>
<rect x="113.8" y="283.32" width="47.6" height="11" fill="#ffffff"/>
<path d="M114.3 294.32 V283.82 H161.4" fill="none" stroke="#c8c8c8" stroke-width="1"/>
<text x="137.2" y="292.22" font-size="8.4" stroke="#1b1b1b" stroke-width="0.12" text-anchor="middle" fill="#1b1b1b" textLength="21.1" lengthAdjust="spacingAndGlyphs">Cooler</text>
<rect x="166.2" y="282.82" width="176.3" height="11.1" fill="#ffffff"/>
<rect x="166.2" y="282.82" width="176.3" height="1" fill="#c4c4c4"/>
<rect x="166.2" y="283.32" width="1" height="11" fill="#e0e0e0"/>
<rect x="166.7" y="283.71999999999997" width="123.11" height="10" fill="#00d800"/>
<text x="254.7" y="292.12" font-size="8.2" stroke="#1b1b1b" stroke-width="0.12" text-anchor="middle" fill="#1b1b1b" textLength="22.4" lengthAdjust="spacingAndGlyphs">70,2%</text>
<rect x="167.1" y="399.3" width="174.6" height="14.599999999999966" rx="2.5" fill="url(#btn)" stroke="#7c7c7c" stroke-width="1"/>
<rect x="168.1" y="400.3" width="172.6" height="12.599999999999966" rx="1.5" fill="none" stroke="#fbfbfb" stroke-width="0.8" opacity="0.8"/>
<text x="198.4" y="410.0" font-size="8.6" stroke="#1e1e1e" stroke-width="0.12" textLength="112" lengthAdjust="spacingAndGlyphs" fill="#1e1e1e" >Скопировать значения каналов</text>
<rect x="167.1" y="420.5" width="174.6" height="14.600000000000023" rx="2.5" fill="url(#btn)" stroke="#7c7c7c" stroke-width="1"/>
<rect x="168.1" y="421.5" width="172.6" height="12.600000000000023" rx="1.5" fill="none" stroke="#fbfbfb" stroke-width="0.8" opacity="0.8"/>
<text x="204.7" y="431.3" font-size="8.6" stroke="#1e1e1e" stroke-width="0.12" textLength="99" lengthAdjust="spacingAndGlyphs" fill="#1e1e1e" >Вставить значения каналов</text>
<rect x="167.1" y="459.5" width="81.4" height="15.300000000000011" rx="2.5" fill="url(#btn)" stroke="#7c7c7c" stroke-width="1"/>
<rect x="168.1" y="460.5" width="79.4" height="13.300000000000011" rx="1.5" fill="none" stroke="#fbfbfb" stroke-width="0.8" opacity="0.8"/>
<text x="175" y="470.90000000000003" font-size="8.6" stroke="#1e1e1e" stroke-width="0.12" textLength="64" lengthAdjust="spacingAndGlyphs" fill="#1e1e1e" >Сохранить пресет</text>
<rect x="261.5" y="459.5" width="80.19999999999999" height="15.300000000000011" rx="2.5" fill="url(#btn)" stroke="#7c7c7c" stroke-width="1"/>
<rect x="262.5" y="460.5" width="78.19999999999999" height="13.300000000000011" rx="1.5" fill="none" stroke="#fbfbfb" stroke-width="0.8" opacity="0.8"/>
<text x="263.4" y="470.90000000000003" font-size="8.6" stroke="#1e1e1e" stroke-width="0.12" textLength="74.6" lengthAdjust="spacingAndGlyphs" fill="#1e1e1e" >Восстановить пресет</text>
<text x="354.6" y="140" font-size="10.2" font-weight="bold" stroke="#1b1b1b" stroke-width="0.3" textLength="33.7" lengthAdjust="spacingAndGlyphs" fill="#1b1b1b" >100,0%</text>
<rect x="359.5" y="150" width="10" height="309.2" fill="url(#groove)"/>
<path d="M360.5 151 V459" stroke="#b4b7b9" stroke-width="1"/>
<path d="M360.3 153.4 V149.6 Q360.3 147.8 362.3 147.8 H368.2 Q370.2 147.8 370.2 149.6 V153.4 Z" fill="#f2f2f2" stroke="#8a8a8a" stroke-width="0.9"/>
<path d="M361 153.2 H369.5" stroke="#9a9a9a" stroke-width="0.8"/>
<path d="M374.6 151 V459" stroke="#c2c2c2" stroke-width="2.2" stroke-dasharray="0.6 2.2"/>
<rect x="393.3" y="132" width="391.4" height="343.5" fill="#ffffff"/>
<path d="M393.8 475.5 V132.5 H784.7" fill="none" stroke="#c4c4c4" stroke-width="1"/>
<path d="M784.2 132.5 V475 H393.8" fill="none" stroke="#c8c8c8" stroke-width="1"/>
<polyline points="408.3,461 419.6,461 430.8,461 453.3,304 498.4,240.5 521.1,241.2 544,208.2 567.3,208.2 589,240.9 634,240.9 657,240.9 702.3,269.8 703.9,269.8 704.4,269.8 705.8,269.8 706.3,269.8 707.6,269.8 725,269.6 747.5,304.9 769.3,461" fill="none" stroke="#3fd8c8" stroke-width="1" stroke-opacity="0.88" stroke-linejoin="miter"/>
<polyline points="408.3,461 419.6,461 430.8,461 453.3,461 498.4,352.5 521.1,318.7 544,301.9 567.3,301.9 589,319.6 634,351.4 657,362.5 702.3,379.2 703.9,290 704.4,461 705.8,461 706.3,461 707.6,452 725,455 747.5,461 769.3,461" fill="none" stroke="#c84848" stroke-width="1" stroke-opacity="0.88" stroke-linejoin="miter"/>
<polyline points="408.3,461 419.6,461 430.8,461 453.3,461 498.4,324.2 521.1,283.3 544,271.2 567.3,271.2 589,284 634,321.6 657,340.4 702.3,363 703.9,257 704.4,461 705.8,461 706.3,445 707.6,434.4 725,445.2 747.5,461 769.3,461" fill="none" stroke="#e2a24e" stroke-width="1" stroke-opacity="0.88" stroke-linejoin="miter"/>
<polyline points="408.3,461 419.6,461 430.8,461 453.3,461 498.4,304.4 521.1,237.7 544,209.5 567.3,209.5 589,240 634,305.2 657,325.3 702.3,351.7 703.9,209 704.4,461 705.8,461 706.3,440 707.6,430.2 725,439.8 747.5,461 769.3,461" fill="none" stroke="#3c9a54" stroke-width="1" stroke-opacity="0.88" stroke-linejoin="miter"/>
<polyline points="408.3,461 419.6,461 430.8,461 453.3,461 498.4,252.5 521.1,172.2 544,146.5 567.3,146.5 589,171.5 634,250.9 657,281 702.3,342.5 703.9,461 704.4,461 705.8,461 706.3,450 707.6,442.9 725,448 747.5,461 769.3,461" fill="none" stroke="#7c6890" stroke-width="1" stroke-opacity="0.88" stroke-linejoin="miter"/>
<polyline points="408.3,461 419.6,461 430.8,461 453.3,461 498.4,225.4 521.1,163.6 544,146.5 567.3,146.5 589,163.2 634,225.6 657,239.4 702.3,266.5 703.9,461 704.4,461 705.8,461 706.3,430 707.6,423.2 725,432.5 747.5,461 769.3,461" fill="none" stroke="#3c3c3c" stroke-width="1" stroke-opacity="0.88" stroke-linejoin="miter"/>
<polyline points="408.3,461 419.6,461 430.8,461 453.3,429.2 498.4,205.6 521.1,160.6 544,146.5 567.3,146.5 589,163 634,203.7 657,226.4 702.3,249 703.9,461 704.4,461 705.8,461 706.3,390 707.6,352.4 725,373.5 747.5,461 769.3,461" fill="none" stroke="#52d2cc" stroke-width="1" stroke-opacity="0.88" stroke-linejoin="miter"/>
<polyline points="408.3,461 419.6,461 430.8,461 453.3,413.4 498.4,189.6 521.1,156.1 544,146.5 567.3,146.5 589,158.2 634,190.9 657,208.8 702.3,240.4 703.9,461 704.4,461 705.8,461 706.3,400 707.6,367.6 725,367.3 747.5,394.3 769.3,461" fill="none" stroke="#4c44b4" stroke-width="1" stroke-opacity="0.88" stroke-linejoin="miter"/>
<polyline points="408.3,461 419.6,461 430.8,422.7 453.3,271.2 498.4,178.6 521.1,154.1 544,146.5 567.3,146.5 589,155 634,177.4 657,194.3 702.3,210.5 703.9,461 704.4,461 705.8,461 706.3,335.5 707.6,335.5 725,351.4 747.5,368.5 769.3,461" fill="none" stroke="#4a8cd2" stroke-width="1" stroke-opacity="0.88" stroke-linejoin="miter"/>
<polyline points="408.3,437 419.6,407.3 430.8,335.2 453.3,241.3 498.4,166.6 521.1,152.1 544,146.5 567.3,146.5 589,153 634,166.5 657,180.2 702.3,197.5 703.9,461 704.4,461 705.8,461 706.3,335.5 707.6,335.5 725,351.4 747.5,368.5 769.3,435.6" fill="none" stroke="#8c48cc" stroke-width="1" stroke-opacity="0.88" stroke-linejoin="miter"/>
<path d="M704.9 262 V461" stroke="#d88a60" stroke-width="1" stroke-opacity="0.9"/>
<path d="M705.6 300 V455" stroke="#c84848" stroke-width="0.9" stroke-opacity="0.85"/>
<path d="M704.4 209 V250" stroke="#4c8a5c" stroke-width="0.9" stroke-opacity="0.9"/>
<path d="M408.3 461.2 H769.3" stroke="#a050e0" stroke-width="1.6"/>
</svg></body></html>
